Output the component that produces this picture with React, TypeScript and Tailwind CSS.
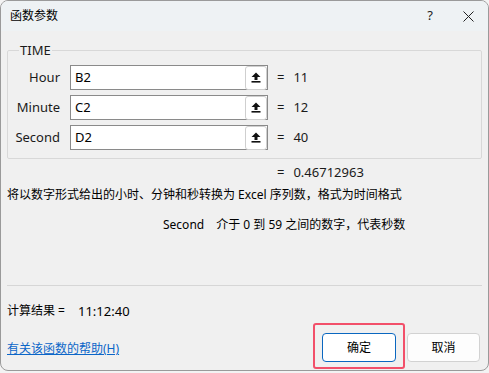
import React from 'react'

const font = { fontFamily: '"Noto Sans", "Noto Sans CJK SC", sans-serif' }

function UploadIcon() {
  return (
    <svg width="10" height="11" viewBox="0 0 10 11">
      <path d="M5 0.5 L9.5 5 L6.5 5 L6.5 8 L3.5 8 L3.5 5 L0.5 5 Z" fill="#111" />
      <rect x="0.5" y="9" width="9" height="1.6" fill="#111" />
    </svg>
  )
}

function ArgRow({ label, value, result }: { label: string; value: string; result: string }) {
  return (
    <div className="flex h-[25px] items-center">
      <div className="w-[45px] text-right text-[13px] text-[#1a1a1a]">{label}</div>
      <div className="ml-[10px] flex h-[25px] w-[198px] items-center justify-between border border-[#8a8a8a] bg-white pl-[4px]">
        <span className="text-[13px] text-black">{value}</span>
        <button className="flex h-[24px] w-[22px] items-center justify-center rounded-[3px] border border-[#cfcfcf] bg-white">
          <UploadIcon />
        </button>
      </div>
      <span className="ml-[9px] text-[13px] text-[#1a1a1a]">=</span>
      <span className="ml-[9px] text-[13px] text-[#1a1a1a]">{result}</span>
    </div>
  )
}

export default function App() {
  return (
    <div className="h-[373px] w-[489px] bg-[#f3f3f3]" style={font}>
      <div className="relative h-[371px] w-[489px] overflow-hidden rounded-[8px] border border-[#9a9a9a] bg-[#f0f0f0]">
        {/* Title bar */}
        <div className="flex h-[30px] items-center justify-between bg-[#eef2f4] pl-[9px] pr-[14px]">
          <span className="text-[12px] text-black">函数参数</span>
          <div className="flex items-center gap-[30px]">
            <span className="text-[13px] text-[#222]">?</span>
            <svg width="11" height="11" viewBox="0 0 11 11">
              <path d="M0.5 0.5 L10.5 10.5 M10.5 0.5 L0.5 10.5" stroke="#222" strokeWidth="1" />
            </svg>
          </div>
        </div>

        <div className="px-[6px]">
          {/* Arguments group */}
          <fieldset className="mt-[12px] h-[116px] rounded-[2px] border border-[#d8d8d8] pl-[7px]">
            <legend className="ml-[4px] px-[1px] text-[13px] leading-[14px] text-[#1a1a1a]">TIME</legend>
            <div className="mt-[8px] flex flex-col gap-[5px]">
              <ArgRow label="Hour" value="B2" result="11" />
              <ArgRow label="Minute" value="C2" result="12" />
              <ArgRow label="Second" value="D2" result="40" />
            </div>
          </fieldset>

          <div className="mt-[4px] flex h-[20px] items-center pl-[270px] text-[13px] text-[#1a1a1a]">
            <span>=</span>
            <span className="ml-[9px]">0.46712963</span>
          </div>
          <div className="mt-[3px] text-[12px] leading-[18px] text-black">
            将以数字形式给出的小时、分钟和秒转换为 Excel 序列数，格式为时间格式
          </div>
          <div className="mt-[12px] flex text-[12px] leading-[18px] text-black">
            <span className="ml-[156px]">Second</span>
            <span className="ml-[12px]">介于 0 到 59 之间的数字，代表秒数</span>
          </div>

          <div className="mt-[51px] h-px bg-[#d6d6d6]" />

          <div className="mt-[16px] flex text-[12px] leading-[18px] text-black">
            <span>计算结果 =</span>
            <span className="ml-[13px] text-[13px]">11:12:40</span>
          </div>

          <div className="flex items-start justify-between">
            <a href="#" className="mt-[20px] text-[12px] leading-[18px] text-[#0b66c8] underline">
              有关该函数的帮助(H)
            </a>
            <div className="mr-[2px] mt-[13px] flex gap-[11px]">
              <button className="h-[29px] w-[74px] rounded-[4px] border border-[#0a67c0] bg-white text-[12px] text-black">
                确定
              </button>
              <button className="h-[29px] w-[73px] rounded-[4px] border border-[#d2d2d2] bg-[#fdfdfd] text-[12px] text-black">
                取消
              </button>
            </div>
          </div>
        </div>

        {/* highlight annotation */}
        <div className="absolute left-[312px] top-[322px] h-[46px] w-[92px] rounded-[3px] border-2 border-[#f2506a]" />
      </div>
    </div>
  )
}
